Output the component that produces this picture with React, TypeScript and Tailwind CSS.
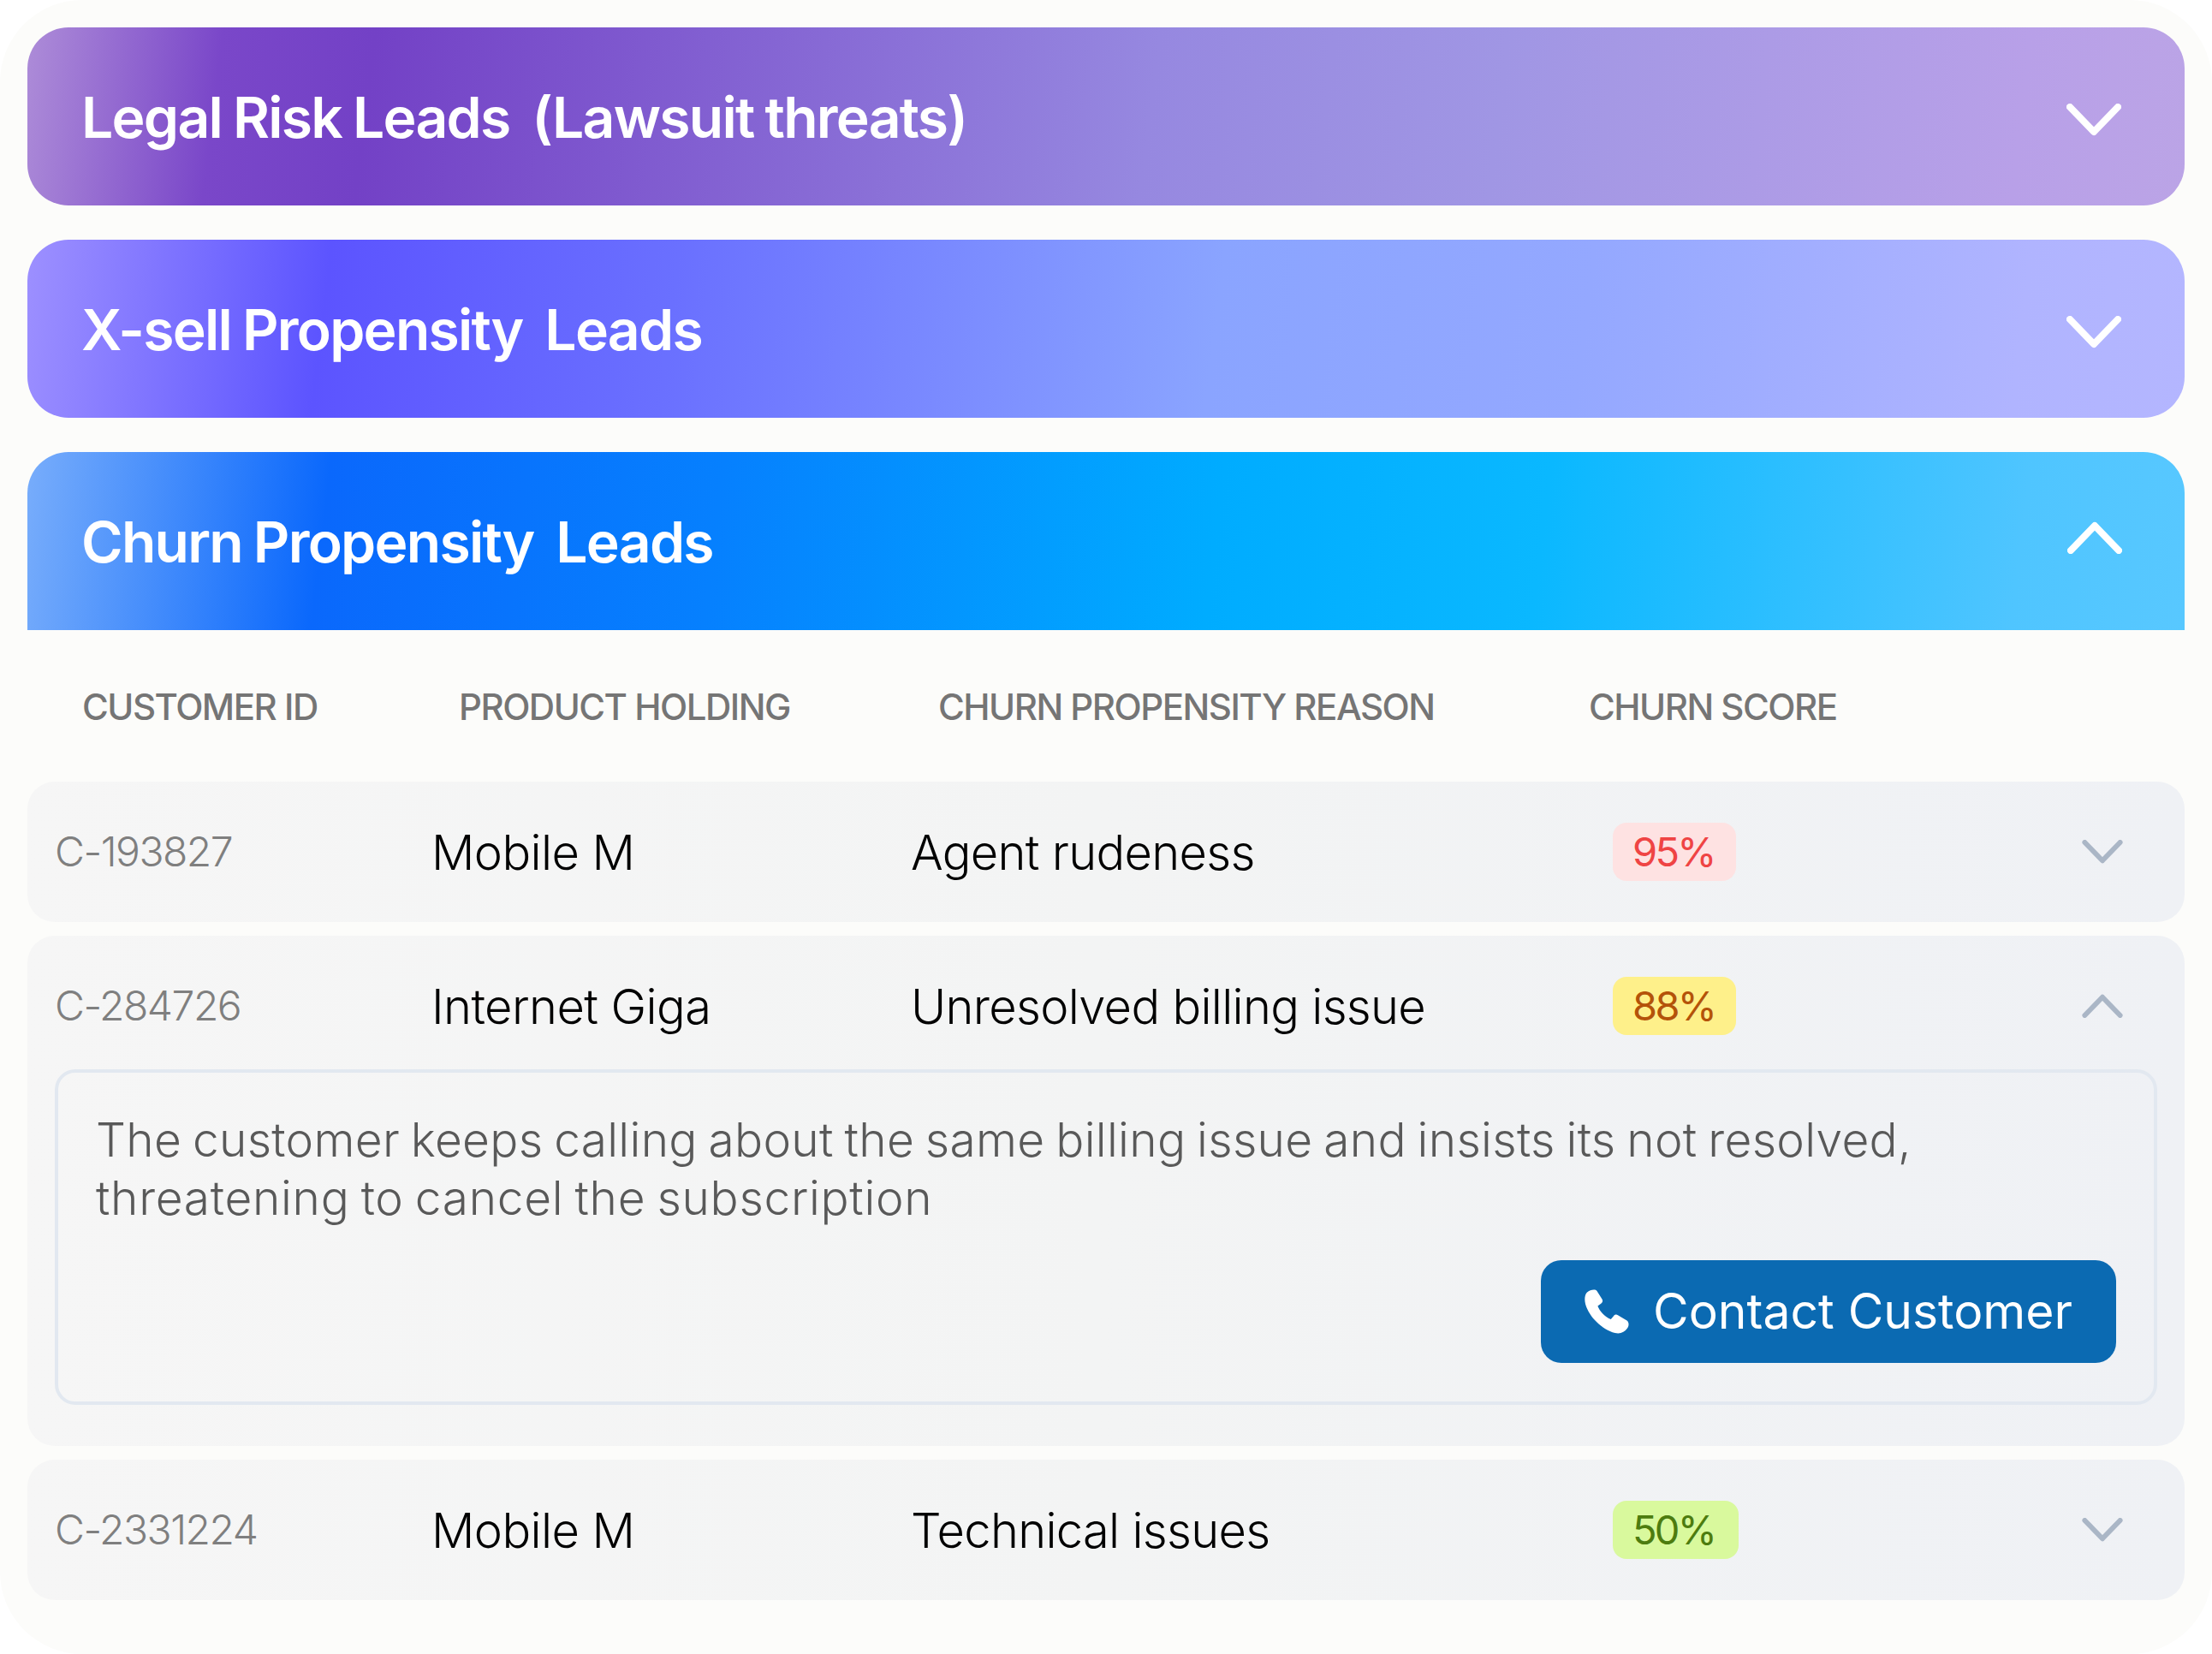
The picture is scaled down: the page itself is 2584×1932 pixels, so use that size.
import type { ReactNode } from 'react';

const font = { sans: 'font-["Inter","Liberation_Sans",sans-serif]' };

function Chevron({ up, className }: { up?: boolean; className: string }) {
  return (
    <svg viewBox="0 0 64 38" fill="none" className={className}>
      <path
        d={up ? 'M4 34 L32 5 L60 34' : 'M4 4 L32 33 L60 4'}
        stroke="currentColor"
        strokeWidth="8"
        strokeLinecap="round"
        strokeLinejoin="round"
      />
    </svg>
  );
}

function PhoneIcon() {
  return (
    <svg viewBox="0 0 52 52" className="h-[52px] w-[52px]" fill="currentColor">
      <path d="M3 3.5 C6.5 0.6 12.5 -0.6 14.5 2 L20.5 11.5 C21.7 13.6 21 15.4 19.2 16.8 L15.4 19.4 C17.5 25.5 24.5 32.8 30.8 35 L33.8 31.4 C35.2 29.6 37 29 39 30.2 L49.5 36.6 C52 38.4 52.2 42.5 50 45.6 C46.8 50.4 41.5 52.4 35.6 51 C20 47 4.8 31.5 1 17 C-0.3 11.6 0.2 6.4 3 3.5 Z" />
    </svg>
  );
}

function Banner({ title, gradient, up, square }: { title: string; gradient: string; up?: boolean; square?: boolean }) {
  return (
    <div className={`flex h-[208px] items-center justify-between pl-[63px] ${up ? 'pr-[73px]' : 'pr-[74px]'} ${gradient} ${square ? 'rounded-t-[48px]' : 'rounded-[48px]'}`}>
      <h2 className="whitespace-pre pt-[3px] text-[66px] font-[560] tracking-[-1.75px] [word-spacing:-2px] text-white">{title}</h2>
      <Chevron up={up} className={`h-[38px] w-[64px] text-white ${up ? 'mb-[8px]' : 'mt-[8px]'}`} />
    </div>
  );
}

function LeadRow({ id, product, reason, score, badge, open, children }: {
  id: string;
  product: string;
  reason: string;
  score: string;
  badge: string;
  open?: boolean;
  children?: ReactNode;
}) {
  return (
    <div className="rounded-[32px] bg-gradient-to-r from-[#f6f6f6] via-[#f3f4f4] to-[#eff1f5] px-[32px]">
      <div className="grid h-[164px] grid-cols-[440px_560px_820px_1fr] items-center">
        <span className="text-[48px] font-light tracking-[-1.5px] text-[#7f7f7f]">{id}</span>
        <span className="pt-[2px] text-[56px] font-light tracking-[-0.6px] text-black">{product}</span>
        <span className="pt-[2px] text-[56px] font-light tracking-[-0.7px] text-black">{reason}</span>
        <div className="flex items-center justify-between pr-[39px]">
          <span className={`flex h-[68px] items-center rounded-[16px] px-[23px] text-[47px] tracking-[-2.7px] ${badge}`}>{score}</span>
          <Chevron up={open} className="h-[28px] w-[50px] text-[#aab6c6]" />
        </div>
      </div>
      {children}
    </div>
  );
}

export default function App() {
  return (
    <div className={`h-[1932px] w-[2584px] bg-white ${font.sans}`}>
      <div className="flex h-full flex-col rounded-[96px] bg-[#fcfcfa] p-[32px]">
        <div className="flex flex-col gap-[40px]">
          <Banner
            title="Legal Risk Leads  (Lawsuit threats)"
            gradient="bg-[linear-gradient(97deg,#ad8cd8_0%,#7a47c9_9%,#7341c6_16%,#9688e0_52%,#a096e4_68%,#b8a0e8_92%,#bba4e6_100%)]"
          />
          <Banner
            title="X-sell Propensity  Leads"
            gradient="bg-[linear-gradient(97deg,#9d90ff_0%,#5c54ff_14%,#6a70ff_30%,#8aa4ff_55%,#94a8ff_72%,#b0b4ff_92%,#b4b6ff_100%)]"
          />
          <Banner
            title="Churn Propensity  Leads"
            gradient="bg-[linear-gradient(97deg,#78adfb_0%,#0a68fc_14%,#0680fe_32%,#00acff_55%,#0ab8ff_70%,#4fc5ff_92%,#58c8ff_100%)]"
            up
            square
          />
        </div>

        <div className="grid h-[177px] grid-cols-[440px_560px_760px_1fr] items-center pl-[64px] pt-[2px] text-[42px] font-medium tracking-[-1.5px] text-[#757575]">
          <span>CUSTOMER ID</span>
          <span>PRODUCT HOLDING</span>
          <span>CHURN PROPENSITY REASON</span>
          <span>CHURN SCORE</span>
        </div>

        <div className="flex flex-col gap-[16px]">
          <LeadRow id="C-193827" product="Mobile M" reason="Agent rudeness" score="95%" badge="w-[144px] bg-[#fee2e2] text-[#ef4444]" />
          <LeadRow id="C-284726" product="Internet Giga" reason="Unresolved billing issue" score="88%" badge="w-[144px] bg-[#fef08a] text-[#b45309]" open>
            <div className="mb-[48px] -mt-[8px] flex h-[392px] flex-col rounded-[24px] border-4 border-[#e2e8f0] pb-[45px] pl-[44px] pr-[44px] pt-[44px]">
              <p className="text-[55px] leading-[68px] font-light tracking-[0.3px] [word-spacing:-3px] text-[#595959]">
                The customer keeps calling about the same billing issue and insists its not resolved,
                <br />
                <span className="tracking-[0.7px]">threatening to cancel the subscription</span>
              </p>
              <button className="mt-auto flex h-[120px] w-[672px] items-center justify-center gap-[28px] self-end rounded-[24px] bg-[#0b6ab2] text-[57px] text-white">
                <PhoneIcon />
                Contact Customer
              </button>
            </div>
          </LeadRow>
          <LeadRow id="C-2331224" product="Mobile M" reason="Technical issues" score="50%" badge="w-[147px] bg-[#d9f99d] text-[#4d7c0f]" />
        </div>
      </div>
    </div>
  );
}
